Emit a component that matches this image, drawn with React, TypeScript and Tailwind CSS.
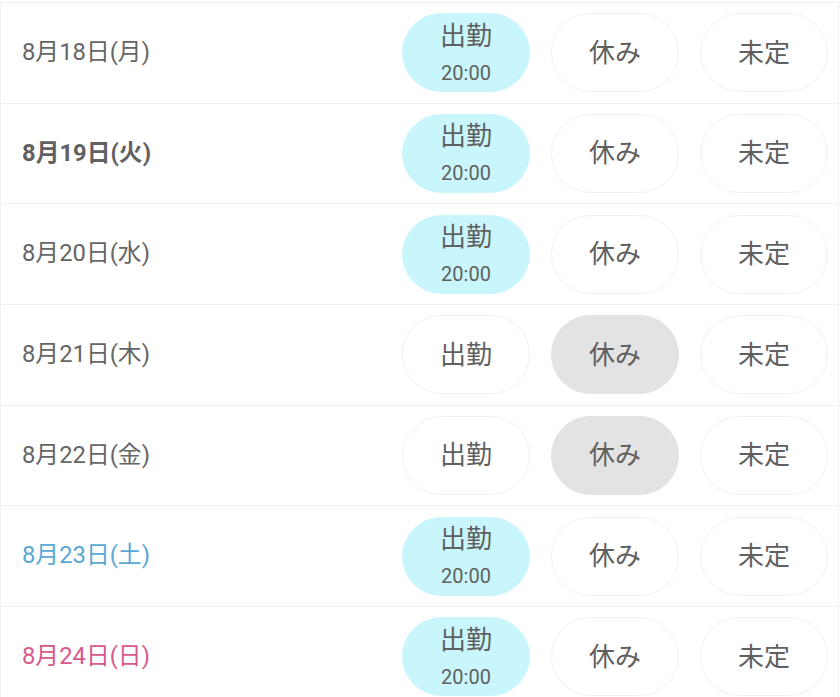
type Status = 'work' | 'off' | 'none'

const days: { label: string; status: Status; tone?: 'bold' | 'sat' | 'sun' }[] = [
  { label: '8月18日(月)', status: 'work' },
  { label: '8月19日(火)', status: 'work', tone: 'bold' },
  { label: '8月20日(水)', status: 'work' },
  { label: '8月21日(木)', status: 'off' },
  { label: '8月22日(金)', status: 'off' },
  { label: '8月23日(土)', status: 'work', tone: 'sat' },
  { label: '8月24日(日)', status: 'work', tone: 'sun' },
]

function Pill({ active, color, children }: { active: boolean; color: 'cyan' | 'gray'; children: React.ReactNode }) {
  const bg = active
    ? color === 'cyan'
      ? 'bg-[#c9f6fc] border-[#c9f6fc]'
      : 'bg-[#e3e3e3] border-[#e3e3e3]'
    : 'bg-white border-[#f0f0f0]'
  return (
    <div
      className={`flex h-[79px] w-[128px] flex-col items-center justify-center rounded-full border text-[26px] text-[#606060] ${bg}`}
    >
      {children}
    </div>
  )
}

export default function App() {
  return (
    <div
      className="min-h-screen bg-white pt-[2px]"
      style={{ fontFamily: "Roboto, 'Noto Sans CJK JP', sans-serif" }}
    >
      <div className="mr-[1px] border-x border-t border-[#f0f0f0]">
        {days.map((d) => {
          const tone =
            d.tone === 'bold'
              ? 'font-bold text-[#616161]'
              : d.tone === 'sat'
                ? 'text-[#5ba8d4]'
                : d.tone === 'sun'
                  ? 'text-[#d8588c]'
                  : 'text-[#666666]'
          return (
            <div
              key={d.label}
              className="flex h-[100.67px] items-center justify-between border-b border-[#f0f0f0] pl-[21px] pr-[10px]"
            >
              <span className={`text-[23.8px] ${tone}`}>{d.label}</span>
              <div className="flex items-center gap-[21px]">
                <Pill active={d.status === 'work'} color="cyan">
                  <span className="leading-[30px]">出勤</span>
                  {d.status === 'work' && (
                    <span className="mt-[10px] text-[20px] leading-[24px]">20:00</span>
                  )}
                </Pill>
                <Pill active={d.status === 'off'} color="gray">
                  <span className="leading-[30px]">休み</span>
                </Pill>
                <Pill active={d.status === 'none'} color="gray">
                  <span className="leading-[30px]">未定</span>
                </Pill>
              </div>
            </div>
          )
        })}
      </div>
    </div>
  )
}
